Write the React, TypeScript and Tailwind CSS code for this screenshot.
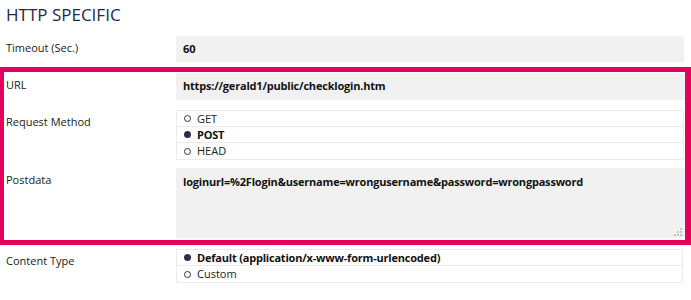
import React from 'react';

const font = { fontFamily: '"Open Sans", "Noto Sans", sans-serif' };

const Radio: React.FC<{ checked?: boolean }> = ({ checked }) =>
  checked ? (
    <span className="inline-block w-[7px] h-[7px] rounded-full bg-[#2a3146]" />
  ) : (
    <span className="inline-block w-[7px] h-[7px] rounded-full border-[1.5px] border-[#2a3146] bg-white" />
  );

const Option: React.FC<{ label: string; checked?: boolean; last?: boolean }> = ({ label, checked, last }) => (
  <div
    className={`flex items-center h-[16px] pl-[7px] gap-[6px] ${last ? 'h-[15px]' : 'border-b border-[#ebebeb]'} ${
      checked ? 'font-bold tracking-[-0.2px] text-[#111]' : 'text-[#222]'
    }`}
  >
    <Radio checked={checked} />
    <span className="leading-[14px]">{label}</span>
  </div>
);

const Label: React.FC<{ children: React.ReactNode }> = ({ children }) => (
  <div className="pt-[5px] leading-[14px] text-[#1a1a1a]">{children}</div>
);

const ResizeDots: React.FC = () => (
  <svg className="absolute right-[3px] bottom-[2px]" width="9" height="9" viewBox="0 0 9 9">
    <rect x="7" y="1" width="2" height="2" fill="#c4c4c4" />
    <rect x="4" y="4" width="2" height="2" fill="#c4c4c4" />
    <rect x="7" y="4" width="2" height="2" fill="#c4c4c4" />
    <rect x="1" y="7" width="2" height="2" fill="#c4c4c4" />
    <rect x="4" y="7" width="2" height="2" fill="#c4c4c4" />
    <rect x="7" y="7" width="2" height="2" fill="#c4c4c4" />
  </svg>
);

const App: React.FC = () => {
  return (
    <div className="w-[691px] h-[300px] bg-white text-[11px] overflow-hidden" style={font}>
      <h2 className="pl-[6px] pt-[4px] h-[36px] text-[17px] leading-[22px] text-[#1c2a48]">HTTP SPECIFIC</h2>

      {/* timeout */}
      <div className="flex pr-[7px]">
        <div className="w-[176px] pl-[6px]">
          <Label>Timeout (Sec.)</Label>
        </div>
        <div className="flex-1 h-[26px] bg-[#f1f1f1] flex items-center pl-[7px] font-bold text-[#111]">60</div>
      </div>

      {/* highlighted block */}
      <div className="mt-[5px] border-t-[5px] border-b-[5px] border-l-[4px] border-r-[6px] border-[#e5005b] pt-[1px] pb-[2px]">
        <div className="flex">
          <div className="w-[172px] pl-[2px]">
            <Label>URL</Label>
          </div>
          <div className="flex-1 h-[27px] bg-[#f1f1f1] flex items-center pl-[7px] font-bold tracking-[-0.2px] text-[#111]">
            https://gerald1/public/checklogin.htm
          </div>
        </div>

        <div className="flex mt-[10px]">
          <div className="w-[172px] pl-[2px]">
            <Label>Request Method</Label>
          </div>
          <div className="flex-1 border border-[#ebebeb] mr-[1px]">
            <Option label="GET" />
            <Option label="POST" checked />
            <Option label="HEAD" last />
          </div>
        </div>

        <div className="flex mt-[8px]">
          <div className="w-[172px] pl-[2px]">
            <Label>Postdata</Label>
          </div>
          <div className="relative flex-1 h-[70px] bg-[#f1f1f1] pl-[7px] pt-[7px] leading-[14px] font-bold tracking-[-0.2px] text-[#111]">
            loginurl=%2Flogin&amp;username=wrongusername&amp;password=wrongpassword
            <ResizeDots />
          </div>
        </div>
      </div>

      {/* content type */}
      <div className="flex pr-[7px] mt-[4px]">
        <div className="w-[176px] pl-[6px]">
          <Label>Content Type</Label>
        </div>
        <div className="flex-1 border border-[#ebebeb] mr-[1px]">
          <Option label="Default (application/x-www-form-urlencoded)" checked />
          <Option label="Custom" last />
        </div>
      </div>
    </div>
  );
};

export default App;
